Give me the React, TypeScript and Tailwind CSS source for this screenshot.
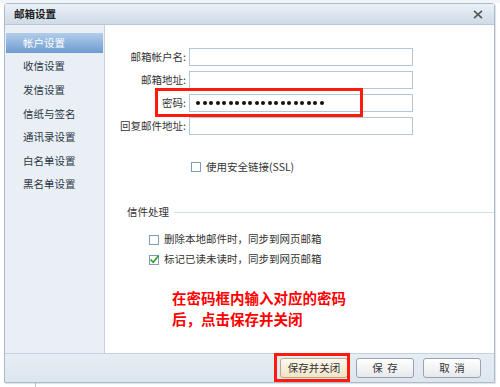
import React from "react";

const font = { fontFamily: '"Noto Sans CJK SC", "Noto Sans", sans-serif' };

function Checkbox({ checked }: { checked?: boolean }) {
  return (
    <div className="relative w-[10px] h-[10px] border border-[#7f9db9] bg-white shrink-0">
      {checked && (
        <svg className="absolute left-[-1px] top-[-2px]" width="11" height="11" viewBox="0 0 11 11">
          <path d="M1.5 5.5 L4.2 8.3 L9.5 1.8" fill="none" stroke="#2f9a2a" strokeWidth="1.6" />
        </svg>
      )}
    </div>
  );
}

function Field({ label, pwd }: { label: string; pwd?: boolean }) {
  return (
    <div className="flex items-center h-[18px]">
      <div className="w-[82px] text-right text-[10.5px] text-[#333] leading-none pr-[1px]">{label}</div>
      <div className="ml-[2px] w-[224px] h-[18px] border border-[#b4c6da] bg-white flex items-center pl-[6px] gap-[2.5px]">
        {pwd &&
          Array.from({ length: 20 }).map((_, i) => (
            <span key={i} className="w-[4px] h-[4px] rounded-full bg-[#111] block" />
          ))}
      </div>
    </div>
  );
}

export default function App() {
  const items = ["帐户设置", "收信设置", "发信设置", "信纸与签名", "通讯录设置", "白名单设置", "黑名单设置"];
  return (
    <div className="w-[500px] h-[387px] bg-white relative overflow-hidden" style={font}>
      <div className="absolute left-[35px] top-0 w-[1px] h-full bg-[#b9c9d8]" />
      <div className="absolute left-0 top-0 w-full h-[3px] bg-[#f2f5f8]" />
      <div className="absolute left-[4px] top-[3px] w-[491px] h-[380px] border border-[#a9bccf] rounded-t-[3px] flex flex-col bg-white shadow-[1px_1px_1px_rgba(0,0,0,0.12)]">
        <div className="h-[21px] shrink-0 bg-gradient-to-b from-[#eaf0f6] to-[#cfdbe7] border-b border-[#b7c8d9] flex items-center justify-between pl-[9px] pr-[11px]">
          <span className="text-[10.5px] font-bold text-[#222] leading-none">邮箱设置</span>
          <svg width="10" height="9" viewBox="0 0 10 9">
            <path d="M1 0.8 L9 8.2 M9 0.8 L1 8.2" stroke="#555" strokeWidth="1.6" />
          </svg>
        </div>
        <div className="flex flex-1 min-h-0">
          <div className="w-[100px] shrink-0 bg-[#e9eff5] border-r border-[#c3d3e3] pt-[8px] px-[1px]">
            {items.map((t, i) => (
              <div
                key={t}
                className={
                  "h-[20px] mb-[3.6px] flex items-center pl-[17px] text-[10.5px] leading-none " +
                  (i === 0
                    ? "bg-gradient-to-b from-[#b2cdea] to-[#6e9bd1] text-white"
                    : "text-[#2a3846]")
                }
              >
                {t}
              </div>
            ))}
          </div>
          <div className="flex-1 relative">
            <div className="pt-[23px] flex flex-col gap-[5px]">
              <Field label="邮箱帐户名:" />
              <Field label="邮箱地址:" />
              <Field label="密码:" pwd />
              <Field label="回复邮件地址:" />
            </div>
            <div className="mt-[26px] h-[12px] flex items-center pl-[86px] gap-[5px]">
              <Checkbox />
              <span className="text-[10.5px] text-[#333] leading-none">使用安全链接(SSL)</span>
            </div>
            <div className="mt-[32px] h-[14px] flex items-center pl-[22px]">
              <span className="text-[10.5px] text-[#333] leading-none">信件处理</span>
              <div className="ml-[5px] flex-1 h-[1px] bg-[#d3dce6]" />
            </div>
            <div className="mt-[14.5px] h-[12px] flex items-center pl-[44px] gap-[5px]">
              <Checkbox />
              <span className="text-[10.5px] text-[#333] leading-none">删除本地邮件时，同步到网页邮箱</span>
            </div>
            <div className="mt-[8px] h-[12px] flex items-center pl-[44px] gap-[5px]">
              <Checkbox checked />
              <span className="text-[10.5px] text-[#333] leading-none">标记已读未读时，同步到网页邮箱</span>
            </div>
            <div className="mt-[21px] pl-[67px] text-[14.5px] leading-[21px] font-bold text-[#ff0000]">
              <div>在密码框内输入对应的密码</div>
              <div>后，点击保存并关闭</div>
            </div>
            <div className="absolute left-[50px] top-[63px] w-[208px] h-[29px] border-[3px] border-[#ff1a0a]" />
          </div>
        </div>
        <div className="h-[29px] shrink-0 bg-gradient-to-b from-[#e6edf4] to-[#dde6ef] border-t border-[#c3d2e0] flex justify-end items-start pt-[4px] pr-[13px] relative">
          <div className="absolute left-[269px] top-[-1px] w-[76px] h-[29px] border-[3px] border-[#ff1a0a]" />
          <button className="w-[68px] h-[20px] rounded-[3px] border border-[#b9ab8a] bg-gradient-to-b from-[#fefaf0] to-[#f1e3c5] text-[10.5px] text-[#333] leading-none">
            保存并关闭
          </button>
          <button className="ml-[8px] w-[58px] h-[20px] rounded-[3px] border border-[#9aa3ad] bg-gradient-to-b from-[#ffffff] to-[#e6e9ec] text-[10.5px] text-[#333] leading-none">
            保&nbsp;&nbsp;存
          </button>
          <button className="ml-[9px] w-[58px] h-[20px] rounded-[3px] border border-[#9aa3ad] bg-gradient-to-b from-[#ffffff] to-[#e6e9ec] text-[10.5px] text-[#333] leading-none">
            取&nbsp;&nbsp;消
          </button>
        </div>
      </div>
    </div>
  );
}
